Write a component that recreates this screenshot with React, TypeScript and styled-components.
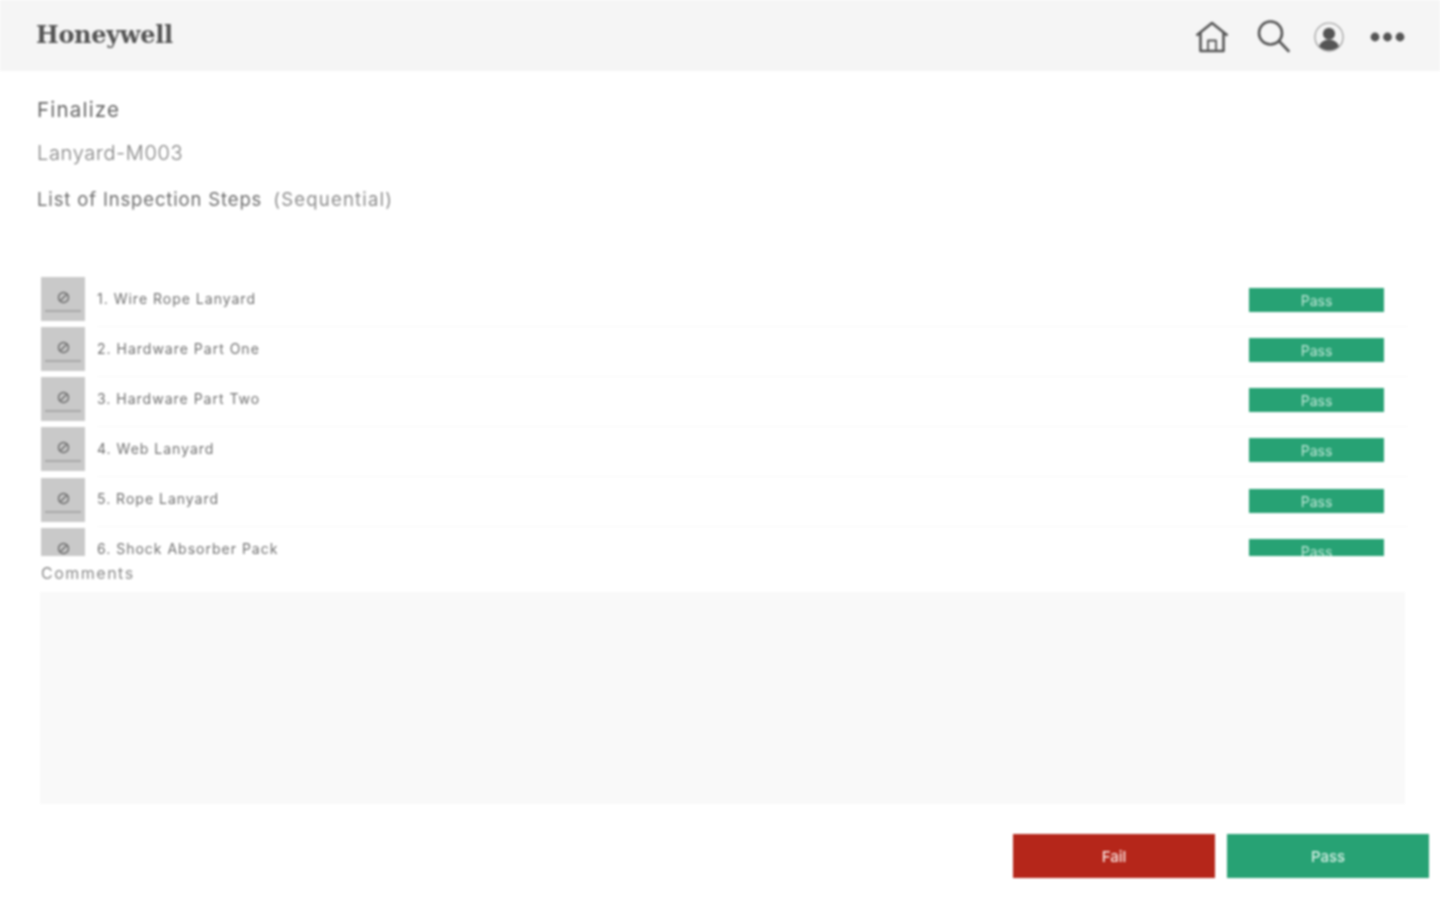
import React from "react";
import styled, { createGlobalStyle } from "styled-components";

const steps = [
  "1. Wire Rope Lanyard",
  "2. Hardware Part One",
  "3. Hardware Part Two",
  "4. Web Lanyard",
  "5. Rope Lanyard",
  "6. Shock Absorber Pack",
];

const GlobalStyle = createGlobalStyle`
  html, body {
    margin: 0;
    padding: 0;
    background: #fff;
    font-family: Inter, "Liberation Sans", sans-serif;
  }
`;

const Page = styled.div`
  width: 1440px;
  height: 900px;
  overflow: hidden;
  filter: blur(0.8px);
`;

const Header = styled.header`
  height: 71px;
  background: #f5f5f5;
  display: flex;
  align-items: center;
  justify-content: space-between;
  padding: 0 35px 0 36px;
`;

const Logo = styled.div`
  font-family: "DejaVu Serif", serif;
  font-weight: 700;
  font-size: 24px;
  letter-spacing: -0.3px;
  color: #555;
  margin-top: -3px;
`;

const Icons = styled.div`
  display: flex;
  align-items: center;
  margin-top: 3px;
`;

const IconSvg = styled.svg<{ $gap?: number }>`
  display: block;
  color: #555;
  margin-left: ${({ $gap }) => $gap ?? 0}px;
`;

const Heading = styled.div`
  padding: 27px 0 0 37px;
  height: 206px;
  box-sizing: border-box;
`;

const Title = styled.div`
  font-size: 20.5px;
  line-height: 24px;
  letter-spacing: 1.2px;
  color: #666;
`;

const SubTitle = styled.div`
  font-size: 20px;
  line-height: 24px;
  font-weight: 300;
  letter-spacing: 0.65px;
  color: #808080;
  margin-top: 19px;
`;

const ListTitle = styled.div`
  font-size: 18.5px;
  line-height: 24px;
  letter-spacing: 0.85px;
  color: #6e6e6e;
  margin-top: 22px;
  display: flex;
  gap: 11px;
`;

const Muted = styled.span`
  color: #8c8c8c;
  letter-spacing: 1.2px;
`;

const StepList = styled.div`
  height: 279px;
  overflow: hidden;
  padding: 0 32px 0 41px;
`;

const StepRow = styled.div`
  height: 50.15px;
  display: flex;
  align-items: flex-start;
`;

const Thumb = styled.div`
  width: 44px;
  height: 44px;
  flex: none;
  background: #c9c9c9;
  display: flex;
  flex-direction: column;
  align-items: center;
  padding-top: 14px;
  box-sizing: border-box;
  color: #6b6b6b;
`;

const ThumbCaption = styled.div`
  width: 36px;
  height: 2px;
  margin-top: 6px;
  background: #a8a8a8;
`;

const StepBody = styled.div`
  flex: 1;
  height: 48.5px;
  margin-left: 12px;
  display: flex;
  justify-content: space-between;
  border-bottom: 1px solid #f9f9f9;
  padding-right: 24px;
`;

const StepName = styled.div`
  font-size: 14px;
  line-height: 18px;
  letter-spacing: 1px;
  color: #707070;
  margin-top: 12.5px;
`;

const PassTag = styled.div`
  width: 135px;
  height: 24px;
  margin-top: 11px;
  background: #27a274;
  color: #bfe6d6;
  font-size: 14px;
  line-height: 25px;
  text-align: center;
`;

const CommentsLabel = styled.div`
  font-size: 16px;
  line-height: 20px;
  letter-spacing: 1.5px;
  color: #8a8a8a;
  padding-left: 41px;
  margin-top: 7px;
`;

const CommentsBox = styled.div`
  width: 1365px;
  height: 212px;
  margin: 9px 0 0 40px;
  background: #f9f9f9;
`;

const Actions = styled.div`
  display: flex;
  justify-content: flex-end;
  gap: 12px;
  padding-right: 11px;
  margin-top: 30px;
`;

const ActionButton = styled.div<{ $fail?: boolean }>`
  width: 202px;
  height: 44px;
  background: ${({ $fail }) => ($fail ? "#b5261a" : "#27a274")};
  color: ${({ $fail }) => ($fail ? "#fbe6e2" : "#d8f0e6")};
  font-size: 15px;
  font-weight: 500;
  line-height: 45px;
  text-align: center;
`;

const HomeIcon = () => (
  <IconSvg width="34" height="34" viewBox="0 0 34 34" fill="none" stroke="currentColor" strokeWidth="2.6" strokeLinejoin="round">
    <path d="M1.5 15.5 17 3l15.5 12.5" />
    <path d="M5.5 13v18h23V13" />
    <path d="M13 31V20.5h8V31" strokeWidth="1.8" />
  </IconSvg>
);

const SearchIcon = () => (
  <IconSvg $gap={28} width="33" height="34" viewBox="0 0 33 34" fill="none" stroke="currentColor" strokeWidth="2.6" strokeLinecap="round">
    <circle cx="13.5" cy="13" r="11.5" />
    <path d="M22.5 21.5 31.5 31" />
  </IconSvg>
);

const UserIcon = () => (
  <IconSvg $gap={24} width="30" height="30" viewBox="0 0 32 32" fill="currentColor">
    <circle cx="16" cy="16" r="15" fill="none" stroke="currentColor" strokeWidth="1.2" opacity="0.6" />
    <circle cx="16" cy="12.5" r="6.5" />
    <path d="M5.5 26c1.5-5 6-7 10.5-7s9 2 10.5 7c-2.5 2.6-6.3 4-10.5 4s-8-1.4-10.5-4Z" />
  </IconSvg>
);

const DotsIcon = () => (
  <IconSvg $gap={26} width="35" height="12" viewBox="0 0 35 12" fill="currentColor">
    <circle cx="5" cy="6" r="4.4" />
    <circle cx="17.5" cy="6" r="4.4" />
    <circle cx="30" cy="6" r="4.4" />
  </IconSvg>
);

const NoImageIcon = () => (
  <svg width="13" height="13" viewBox="0 0 13 13" fill="none" stroke="currentColor" strokeWidth="1.4">
    <circle cx="6.5" cy="6.5" r="5" />
    <path d="M3 10 10 3" />
  </svg>
);

export default function App() {
  return (
    <Page>
      <GlobalStyle />
      <Header>
        <Logo>Honeywell</Logo>
        <Icons>
          <HomeIcon />
          <SearchIcon />
          <UserIcon />
          <DotsIcon />
        </Icons>
      </Header>
      <Heading>
        <Title>Finalize</Title>
        <SubTitle>Lanyard-M003</SubTitle>
        <ListTitle>
          <span>List of Inspection Steps</span>
          <Muted>(Sequential)</Muted>
        </ListTitle>
      </Heading>
      <StepList>
        {steps.map((step) => (
          <StepRow key={step}>
            <Thumb>
              <NoImageIcon />
              <ThumbCaption />
            </Thumb>
            <StepBody>
              <StepName>{step}</StepName>
              <PassTag>Pass</PassTag>
            </StepBody>
          </StepRow>
        ))}
      </StepList>
      <CommentsLabel>Comments</CommentsLabel>
      <CommentsBox />
      <Actions>
        <ActionButton $fail>Fail</ActionButton>
        <ActionButton>Pass</ActionButton>
      </Actions>
    </Page>
  );
}
